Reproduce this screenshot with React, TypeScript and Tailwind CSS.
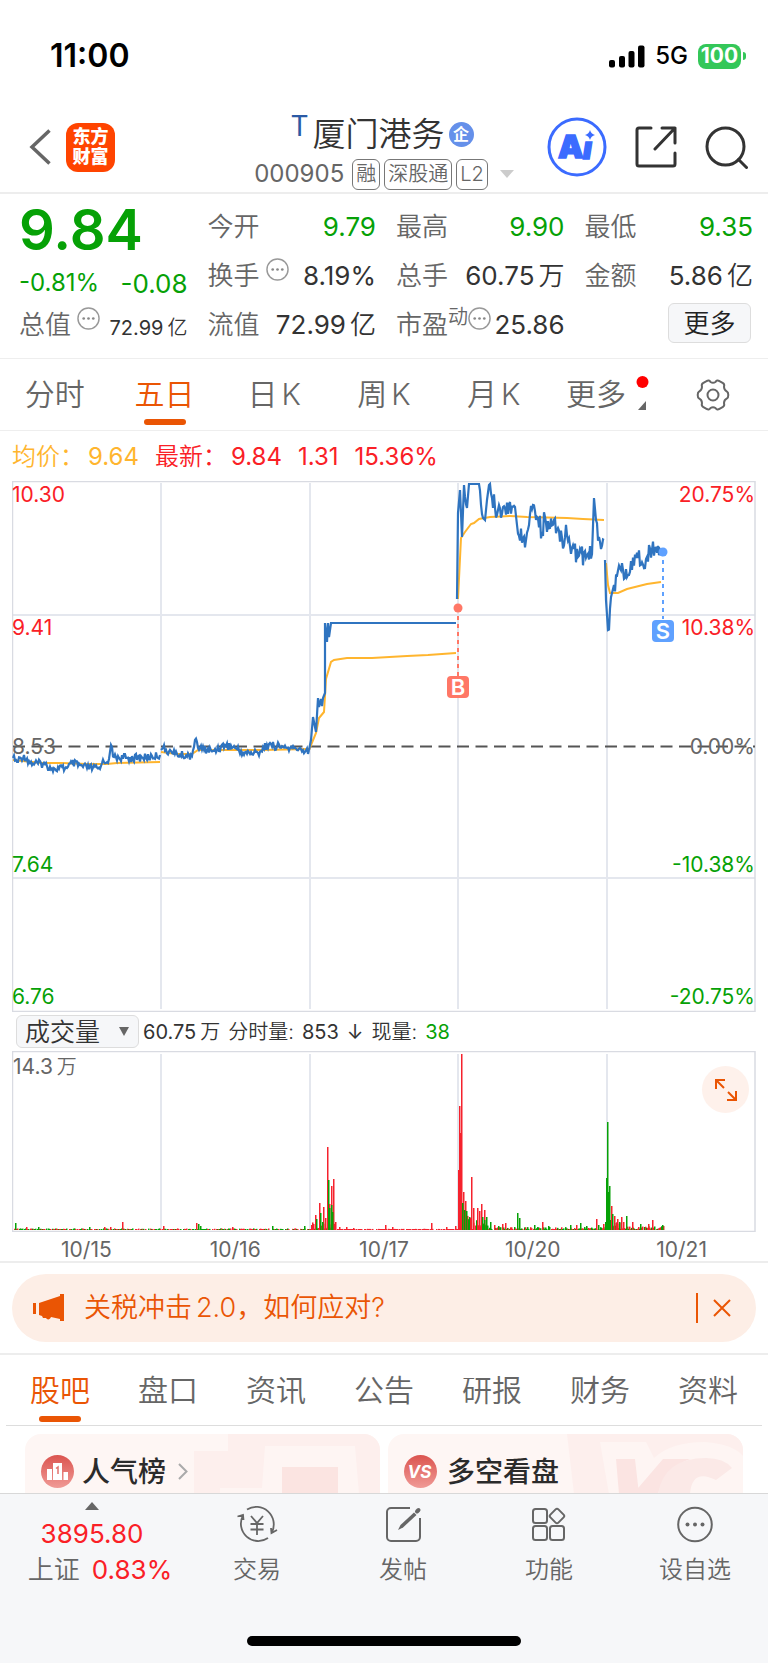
type Point = [number, number];

const avgLines = [
  "1,279 30,282 50,282 75,283 95,283 105,282 148,281",
  "149,271 165,273 180,273 186,269 210,269 250,269 297,268",
  "297,269 304,252 307,237 312,231 314,198 319,181 322,179 335,177 360,177 395,175 416,174 444,172",
  "446,118 449,57 453,51 459,43 462,42 467,38 478,36 498,35 515,36 555,37 571,38 592,39",
  "594,82 596,104 598,112 606,112 615,108 635,103 649,101",
];

const priceDays: { noise: number; points: Point[] }[] = [
  {
    noise: 4,
    points: [[1, 277], [5, 281], [12, 274], [18, 282], [31, 283], [43, 288], [55, 287], [60, 282], [71, 286], [88, 288], [90, 282], [97, 278], [99, 264], [102, 276], [115, 277], [131, 277], [148, 274]],
  },
  {
    noise: 4,
    points: [[149, 269], [151, 267], [160, 272], [168, 274], [180, 275], [183, 259], [186, 267], [201, 270], [213, 264], [223, 267], [231, 272], [246, 272], [255, 264], [271, 266], [285, 269], [297, 269]],
  },
  {
    noise: 0,
    points: [[297, 269], [299, 259], [301, 236], [304, 251], [306, 217], [307, 226], [309, 218], [310, 225], [311, 217], [313, 212], [313, 142], [315, 161], [316, 142], [317, 156], [319, 142], [444, 142]],
  },
  {
    noise: 11,
    points: [[445, 118], [446, 32], [448, 9], [450, 56], [452, 4], [455, 27], [457, 3], [467, 3], [471, 37], [473, 39], [475, 19], [477, 4], [480, 17], [483, 27], [486, 29], [491, 26], [498, 21], [503, 26], [505, 44], [514, 59], [517, 44], [521, 24], [525, 36], [530, 51], [533, 36], [538, 47], [545, 49], [550, 57], [555, 54], [560, 67], [566, 76], [580, 73], [582, 17], [584, 39], [587, 56], [592, 59]],
  },
  {
    noise: 11,
    points: [[593, 79], [594, 119], [596, 149], [600, 112], [602, 104], [608, 87], [611, 89], [615, 96], [620, 89], [626, 77], [635, 76], [640, 69], [651, 68]],
  },
];

const rand = (n: number) => {
  const s = Math.sin(n * 12.9898) * 43758.5453;
  return s - Math.floor(s);
};

// joins the points with a line that jitters a little on every step
function jitter(points: Point[], noise: number) {
  const out: string[] = [];
  points.forEach(([x, y], i) => {
    out.push(`${x},${y}`);
    const next = points[i + 1];
    // the top of the chart clips the price, so that stretch stays flat
    if (!next || noise === 0 || next[0] - x < 3 || (y === 3 && next[1] === 3)) return;
    for (let px = x + 1; px < next[0]; px += 1) {
      const base = y + ((next[1] - y) * (px - x)) / (next[0] - x);
      const py = base + (rand(px) - 0.5) * 2 * noise;
      out.push(`${px},${Math.max(3, py).toFixed(1)}`);
    }
  });
  return out.join(" ");
}

type Bar = { x: number; h: number; up: boolean };

const spikes: [number, number, 0 | 1][] = [
  [3, 7, 0], [14, 3, 1], [26, 3, 0], [77, 3, 0], [92, 3, 1], [98, 3, 1], [110, 8, 1], [151, 4, 1], [184, 7, 1], [186, 6, 0], [188, 4, 0], [220, 3, 1], [260, 4, 0], [292, 4, 0],
  [299, 5, 1], [301, 6, 1], [303, 15, 1], [304, 11, 0], [307, 27, 1], [308, 17, 0], [311, 23, 1], [313, 12, 1], [315, 83, 1], [316, 50, 0], [317, 26, 1], [319, 44, 1], [321, 51, 1], [319, 25, 0], [317, 22, 0], [320, 18, 0], [310, 8, 0], [323, 8, 1], [327, 3, 1], [334, 3, 1], [341, 2, 1],
  [373, 5, 1], [380, 3, 1], [419, 7, 1], [434, 3, 1], [443, 4, 1],
  [446, 60, 1], [447, 124, 1], [448, 97, 1], [449, 176, 1], [451, 38, 1], [450, 27, 0], [453, 29, 1], [452, 20, 0], [454, 19, 0], [457, 13, 0], [458, 12, 1], [459, 53, 1], [461, 22, 1], [465, 22, 1], [467, 19, 1], [469, 26, 1], [470, 13, 0], [472, 20, 1], [472, 10, 0], [474, 13, 0], [478, 8, 0], [482, 5, 1], [486, 4, 0], [490, 6, 1], [493, 7, 1], [505, 17, 0], [507, 12, 0], [522, 5, 0], [530, 8, 1], [536, 4, 0], [558, 5, 0], [564, 5, 1], [568, 7, 0], [574, 4, 0], [584, 11, 1], [586, 5, 0], [591, 6, 1], [593, 8, 0],
  [594, 52, 0], [595, 108, 0], [596, 38, 0], [597, 44, 0], [599, 24, 1], [600, 16, 0], [602, 14, 1], [605, 11, 1], [607, 8, 0], [609, 13, 1], [611, 8, 1], [614, 14, 0], [620, 8, 1], [628, 6, 0], [636, 6, 1], [640, 10, 1], [650, 5, 0],
];

const bars: Bar[] = [];
for (let x = 2; x < 652; x += 1) {
  let level = 1.6;
  if (x > 322 && x < 446) level = 1.2;
  if (x > 298 && x <= 322) level = 8;
  if (x >= 446 && x < 593) level = 3 + Math.max(0, 478 - x) / 2;
  if (x >= 593) level = 4 + Math.max(0, 615 - x) / 2;
  const h = level * rand(x + 700);
  if (h < 0.4) continue;
  bars.push({ x, h: Math.max(1, h), up: x > 322 && x < 446 ? true : rand(x + 90) > 0.5 });
}
spikes.forEach(([x, h, up]) => bars.push({ x, h, up: up === 1 }));

function Dots({ className = "" }: { className?: string }) {
  return (
    <svg width="23" height="23" viewBox="0 0 24 24" className={className} aria-hidden="true">
      <circle cx="12" cy="12" r="11" fill="none" stroke="#999" strokeWidth="1.500" />
      <circle cx="7" cy="12" r="1.400" fill="#888" />
      <circle cx="12" cy="12" r="1.400" fill="#888" />
      <circle cx="17" cy="12" r="1.400" fill="#888" />
    </svg>
  );
}

function StatusBar() {
  return (
    <div className="flex h-28 items-center justify-between pr-[22px] pl-[50px] text-black">
      <span className="text-[32px] font-semibold">11:00</span>
      <div className="flex items-center">
        <svg width="36" height="23" viewBox="0 0 36 23" aria-hidden="true">
          <rect x="0" y="15" width="6" height="7.500" rx="2" />
          <rect x="10" y="11" width="6" height="11.500" rx="2" />
          <rect x="19.500" y="6" width="6" height="16.500" rx="2" />
          <rect x="29" y="0.500" width="6.500" height="22" rx="2" />
        </svg>
        <span className="ml-2.5 text-2xl font-medium">5G</span>
        <span className="ml-2.5 flex h-[25px] w-[43px] items-center justify-center rounded-lg bg-[#34c759] text-[21px] font-bold text-white">
          100
        </span>
        <span className="ml-0.5 h-2 w-[3px] rounded-r-full bg-[#34c759]" />
      </div>
    </div>
  );
}

function Header() {
  return (
    <header className="grid h-[82px] grid-cols-[1fr_auto_1fr] items-center border-b-2 border-[#ededed]">
      <div className="flex items-center gap-[15px] pb-2.5 pl-[29px]">
        <button aria-label="返回">
          <svg width="22" height="36" viewBox="0 0 22 36" fill="none" stroke="#666" strokeWidth="3.500">
            <path d="M20.500 1.500 3 18l17.500 16.500" />
          </svg>
        </button>
        <a
          href="#"
          className="flex size-[49px] flex-col items-center justify-center rounded-xl bg-[#ff4400] text-lg leading-5 font-black text-white"
        >
          <span>东方</span>
          <span>财富</span>
        </a>
      </div>
      <div className="flex flex-col items-center gap-1">
        <h1 className="flex h-10 items-center pr-1 text-[33px] leading-10 font-[350] text-[#333]">
          <span className="mr-1 self-start text-[28px] leading-6 font-normal text-[#2b5aa5]">T</span>
          厦门港务
          <span className="ml-1 flex size-[25px] items-center justify-center rounded-full bg-[#6590ea] text-base leading-4 font-bold text-white">
            企
          </span>
        </h1>
        <div className="flex h-8 items-center gap-1 text-[#666]">
          <span className="mr-1 text-2xl">000905</span>
          <span className="flex h-[31px] items-center rounded-md border border-[#777] px-[3px] text-xl font-[350]">融</span>
          <span className="flex h-[31px] items-center rounded-md border border-[#777] px-[3px] text-xl font-[350]">深股通</span>
          <span className="flex h-[31px] items-center rounded-md border border-[#777] px-[3px] text-xl font-[350]">L2</span>
          <svg width="14" height="8" viewBox="0 0 14 8" className="ml-2" aria-hidden="true">
            <path d="M0 0h14L7 8z" fill="#ccc" />
          </svg>
        </div>
      </div>
      <div className="flex items-center justify-end gap-7 pr-5 pb-2.5">
        <button aria-label="Ai">
          <svg width="60" height="60" viewBox="0 0 60 60">
            <circle cx="30" cy="30" r="28" fill="none" stroke="#3b6bff" strokeWidth="3" />
            <text x="11" y="41" fill="#3b6bff" stroke="#3b6bff" strokeWidth="1.500" fontSize="32" className="font-black">
              A
            </text>
            <text x="36" y="42" fill="#3b6bff" stroke="#3b6bff" strokeWidth="1.500" fontSize="30" className="font-black italic">
              ı
            </text>
            <path d="M43 13q1 4 5 5-4 1-5 5-1-4-5-5 4-1 5-5z" fill="#3b6bff" />
          </svg>
        </button>
        <button aria-label="分享">
          <svg width="42" height="42" viewBox="0 0 42 42" fill="none" stroke="#333" strokeWidth="3" strokeLinecap="round" strokeLinejoin="round">
            <path d="M16 2H4a2 2 0 0 0-2 2v34a2 2 0 0 0 2 2h34a2 2 0 0 0 2-2V27M27 2h13v15M40 2 20 23" />
          </svg>
        </button>
        <button aria-label="搜索">
          <svg width="43" height="43" viewBox="0 0 43 43" fill="none" stroke="#333" strokeWidth="3" strokeLinecap="round">
            <circle cx="20.500" cy="20.500" r="18.500" />
            <path d="m33.500 33.500 8 8" />
          </svg>
        </button>
      </div>
    </header>
  );
}

function Stat({
  label,
  value,
  unit,
  green,
  info,
  sup,
}: {
  label: string;
  value: string;
  unit?: string;
  green?: boolean;
  info?: boolean;
  sup?: string;
}) {
  return (
    <div className="flex h-[49px] items-center justify-between text-[26px] whitespace-nowrap">
      <dt className="flex items-center font-[350] text-[#666]">
        {label}
        {sup && <span className="self-start text-xl leading-6">{sup}</span>}
        {info && <Dots className={sup ? "mb-3" : "mb-3 ml-1.5"} />}
      </dt>
      <dd className={green ? "text-[#06a106]" : "text-[#333]"}>
        {value}
        {unit && <span className="ml-1 font-[350]">{unit}</span>}
      </dd>
    </div>
  );
}

function Quote() {
  return (
    <section className="grid grid-cols-4 gap-5 border-b border-[#eee] pt-2 pr-[15px] pb-[9px] pl-[19px]">
      <div>
        <div className="flex h-14 items-center text-[56px] font-semibold text-[#06a106]">9.84</div>
        <div className="flex h-[42px] items-center justify-between pt-2 text-[#06a106]">
          <span className="text-2xl">-0.81%</span>
          <span className="text-[26px]">-0.08</span>
        </div>
        <div className="flex h-[49px] items-center justify-between whitespace-nowrap">
          <span className="flex items-center text-[26px] font-[350] text-[#666]">
            总值
            <Dots className="mb-3 ml-1.5" />
          </span>
          <span className="pt-1.5 text-xl text-[#333]">
            72.99<span className="ml-1 font-[350]">亿</span>
          </span>
        </div>
      </div>
      <dl>
        <Stat label="今开" value="9.79" green />
        <Stat label="换手" value="8.19%" info />
        <Stat label="流值" value="72.99" unit="亿" />
      </dl>
      <dl>
        <Stat label="最高" value="9.90" green />
        <Stat label="总手" value="60.75" unit="万" />
        <Stat label="市盈" value="25.86" sup="动" info />
      </dl>
      <div>
        <dl>
          <Stat label="最低" value="9.35" green />
          <Stat label="金额" value="5.86" unit="亿" />
        </dl>
        <div className="flex h-[49px] items-center justify-end">
          <button className="mr-0.5 mb-1 h-10 w-[83px] rounded-md border border-[#ddd] bg-[#f6f7f9] text-[26px] font-[350] text-[#222]">
            更多
          </button>
        </div>
      </div>
    </section>
  );
}

function PeriodTabs() {
  return (
    <nav className="grid h-[72px] grid-cols-7 border-b border-[#eee] text-[30px] font-[350] text-[#666]">
      <button>分时</button>
      <button className="relative text-[#ea5504]">
        五日
        <span className="absolute bottom-[5px] left-1/2 h-1.5 w-[42px] -translate-x-1/2 rounded-full bg-[#ea5504]" />
      </button>
      {["日", "周", "月"].map((unit) => (
        <button key={unit}>
          {unit}
          <span className="ml-1">K</span>
        </button>
      ))}
      <button className="flex items-center justify-center gap-2.5 pl-2">
        更多
        <svg width="13" height="54" viewBox="0 0 13 54" aria-hidden="true">
          <circle cx="6.500" cy="14" r="6" fill="#f00" />
          <path d="M10 33v9H2z" fill="#666" />
        </svg>
      </button>
      <button className="flex items-center justify-center" aria-label="设置">
        <svg width="34" height="34" viewBox="0 0 34 34" fill="none" stroke="#666" strokeWidth="2" strokeLinejoin="round">
          <path d="M10.500 3.200q2.500-1.600 4 .8 2.500 1.600 5 0 1.500-2.400 4-.8l3.500 2q1.800 1 1 3.800.2 3.400 3 4.600 1.300.8 1.300 3.400t-1.300 3.400q-2.800 1.200-3 4.600.8 2.800-1 3.800l-3.500 2q-2.500 1.600-4-.8-2.500-1.600-5 0-1.500 2.400-4 .8l-3.500-2q-1.800-1-1-3.800-.2-3.400-3-4.600-1.300-.8-1.300-3.400t1.300-3.400q2.800-1.200 3-4.600-.8-2.800 1-3.800z" />
          <circle cx="17" cy="17" r="5.500" />
        </svg>
      </button>
    </nav>
  );
}

const axisLabels = [
  { y: 21, left: "10.30", right: "20.75%", color: "#fa2026" },
  { y: 154, left: "9.41", right: "10.38%", color: "#fa2026" },
  { y: 273, left: "8.53", right: "0.00%", color: "#666" },
  { y: 391, left: "7.64", right: "-10.38%", color: "#06a106" },
  { y: 523, left: "6.76", right: "-20.75%", color: "#06a106" },
];

function PriceChart() {
  return (
    <div className="px-3">
      <div className="flex h-[50px] items-center pt-0.5 text-2xl whitespace-nowrap text-[#fa2026]">
        <span className="font-[350] text-[#ffb52e]">均价：</span>
        <span className="ml-1 text-[#ffb52e]">9.64</span>
        <span className="ml-4 font-[350]">最新：</span>
        <span className="ml-1">9.84</span>
        <span className="ml-4">1.31</span>
        <span className="ml-4">15.36%</span>
      </div>
      <svg viewBox="0 0 744 531" className="block w-full" role="img" aria-label="五日走势">
        <g fill="none" stroke="#e4e7ee" strokeWidth="2">
          <path d="M149 2V528M298 2V528M446 2V528M595 2V528M1 134H743M1 397H743" />
          <rect x="0.500" y="0.500" width="742.500" height="530" stroke="#d9dbe2" strokeWidth="1.500" />
        </g>
        <path d="M1 265.500H743" stroke="#555" strokeWidth="2" strokeDasharray="12 6.500" />
        {avgLines.map((line) => (
          <polyline key={line} points={line} fill="none" stroke="#ffb52e" strokeWidth="2" />
        ))}
        {priceDays.map((day, i) => (
          <polyline key={i} points={jitter(day.points, day.noise)} fill="none" stroke="#2f74c0" strokeWidth="2.200" />
        ))}
        <path d="M446 127V196" stroke="#ff7766" strokeWidth="2" strokeDasharray="4 4" />
        <circle cx="446" cy="127" r="4.500" fill="#ff7766" />
        <rect x="435" y="195" width="22" height="22" rx="4" fill="#ff7766" />
        <text x="446" y="214" textAnchor="middle" fontSize="22" fill="#fff" className="font-semibold">
          B
        </text>
        <path d="M651 71V138" stroke="#5fa1ff" strokeWidth="2" strokeDasharray="4 4" />
        <circle cx="651" cy="71" r="4.500" fill="#5fa1ff" />
        <rect x="640" y="139" width="22" height="22" rx="4" fill="#5fa1ff" />
        <text x="651" y="158" textAnchor="middle" fontSize="22" fill="#fff" className="font-semibold">
          S
        </text>
        {axisLabels.map((label) => (
          <g key={label.left} fontSize="21" fill={label.color}>
            <text x="0" y={label.y}>
              {label.left}
            </text>
            <text x="743" y={label.y} textAnchor="end">
              {label.right}
            </text>
          </g>
        ))}
      </svg>
    </div>
  );
}

function VolumeChart() {
  return (
    <div className="border-b-2 border-[#ededed] px-3">
      <div className="flex h-[39px] items-center text-xl whitespace-nowrap text-[#333]">
        <div className="relative ml-1">
          <select
            aria-label="指标"
            className="h-[33px] w-[123px] appearance-none rounded-md border border-[#ddd] bg-[#f6f7f9] pl-2 text-[25px] leading-7 font-[350]"
          >
            <option>成交量</option>
          </select>
          <svg width="10" height="9" viewBox="0 0 10 9" className="pointer-events-none absolute top-3 right-2.5">
            <path d="M0 0h10L5 9z" fill="#666" />
          </svg>
        </div>
        <span className="ml-1">60.75</span>
        <span className="ml-1 font-[350]">万</span>
        <span className="ml-2 font-[350]">分时量:</span>
        <span className="ml-2">853</span>
        <span className="ml-2">↓</span>
        <span className="ml-2 font-[350]">现量:</span>
        <span className="ml-2 text-[#06a106]">38</span>
      </div>
      <div className="relative">
        <svg viewBox="0 0 744 181" className="block w-full" role="img" aria-label="成交量">
          <g fill="none" stroke="#e4e7ee" strokeWidth="2">
            <path d="M149 3V178M298 3V178M446 3V178M595 3V178" />
            <rect x="0.500" y="0.500" width="742.500" height="180" stroke="#d9dbe2" strokeWidth="1.500" />
          </g>
          {bars.map((bar, i) => (
            <rect key={i} x={bar.x} y={179 - bar.h} width="1.500" height={bar.h} fill={bar.up ? "#f5222d" : "#06a106"} />
          ))}
          <text x="1" y="23" fontSize="21" fill="#666">
            14.3
            <tspan dx="4" fontSize="20" className="font-[350]">
              万
            </tspan>
          </text>
        </svg>
        <button
          aria-label="全屏"
          className="absolute top-[15px] right-[7px] flex size-[47px] items-center justify-center rounded-full bg-[#fef1eb]"
        >
          <svg width="24" height="24" viewBox="0 0 24 24" fill="none" stroke="#ea5504" strokeWidth="2">
            <path d="M2 11V2h9M2 2l8 8M22 13v9h-9M22 22l-8-8" />
          </svg>
        </button>
      </div>
      <div className="grid h-[29px] grid-cols-5 items-center pt-0.5 text-center text-[21px] text-[#666]">
        <span>10/15</span>
        <span>10/16</span>
        <span>10/17</span>
        <span>10/20</span>
        <span>10/21</span>
      </div>
    </div>
  );
}

function Notice() {
  return (
    <div className="border-b-2 border-[#ededed] px-3 py-[11px]">
      <div className="flex h-[68px] items-center rounded-full bg-[#fdeee6] pr-6 pl-5 text-[#ea5504]">
        <svg width="33" height="30" viewBox="0 0 33 30" fill="#ea5504" aria-hidden="true">
          <path d="M1 10h3v11H1zM7 10 28 3V1h4v27h-4v-2l-9-2c-1 3-4 3-5 1h-3l-1-2-3-1z" />
        </svg>
        <a href="#" className="ml-[19px] text-[27px] font-[350] whitespace-nowrap">
          关税冲击<span className="ml-1">2.0</span>，如何应对?
        </a>
        <span className="ml-auto h-[30px] w-0.5 bg-[#ea5504]" />
        <button aria-label="关闭" className="ml-3.5">
          <svg width="20" height="20" viewBox="0 0 20 20" fill="none" stroke="#ea5504" strokeWidth="2">
            <path d="m2 2 16 16M18 2 2 18" />
          </svg>
        </button>
      </div>
    </div>
  );
}

const sections = ["股吧", "盘口", "资讯", "公告", "研报", "财务", "资料"];

function SectionTabs() {
  return (
    <nav className="mx-1.5 grid h-[71px] grid-cols-7 border-b border-[#ddd] text-[30px] font-[350] text-[#666]">
      {sections.map((name, i) => (
        <button key={name} className={i === 0 ? "relative text-[#ea5504]" : ""}>
          {name}
          {i === 0 && (
            <span className="absolute bottom-[3px] left-1/2 h-1.5 w-[42px] -translate-x-1/2 rounded-full bg-[#ea5504]" />
          )}
        </button>
      ))}
    </nav>
  );
}

function Cards() {
  return (
    <div className="grid h-[67px] grid-cols-2 gap-2 overflow-hidden px-[25px] pt-2">
      <a href="#" className="relative flex h-32 items-start overflow-hidden rounded-2xl bg-[#fef6f4] pt-[17px] pl-4">
        <svg viewBox="0 0 186 60" className="absolute top-0 right-0 h-[60px] w-[186px]" aria-hidden="true">
          <path d="M34 0h152v60H0V17h34z" fill="#fdefed" />
          <path d="M71 12h90l4 48H26l0-6h42z" fill="#fef5f3" />
          <path d="M88 33h56v27H88z" fill="#fbe4e1" />
        </svg>
        <svg width="33" height="33" viewBox="0 0 33 33" className="mt-1" aria-hidden="true">
          <linearGradient id="rank" x2="0" y2="1">
            <stop stopColor="#db544f" />
            <stop offset="1" stopColor="#f09a96" />
          </linearGradient>
          <circle cx="16.500" cy="16.500" r="16.500" fill="url(#rank)" />
          <path d="M6 14h5v11H6zM12 8h9v17h-9zM22.500 17H27v8h-4.500z" fill="#fff" />
          <path d="M15 13.500 17 12v7" fill="none" stroke="#e2706b" strokeWidth="1.500" />
        </svg>
        <span className="relative ml-2 text-[28px] font-medium text-[#2b2b2b]">人气榜</span>
        <svg width="10" height="17" viewBox="0 0 10 17" className="relative mt-3 ml-3" fill="none" stroke="#aaa" strokeWidth="2">
          <path d="m1 1 7.500 7.500L1 16" />
        </svg>
      </a>
      <a href="#" className="relative flex h-32 items-start overflow-hidden rounded-2xl bg-[#fef6f4] pt-[17px] pl-4">
        <svg viewBox="0 0 176 60" className="absolute top-0 right-0 h-[60px] w-[176px]" aria-hidden="true">
          <path d="M0 0h176v60H7z" fill="#fdefed" />
          <path d="M33 8h46l8 16Q104 8 138 8q28 2 38 14v38H42z" fill="#fef5f3" />
          <path d="M49 25h19l4 35H52zM96 25h27q-26 10-32 35H66z" fill="#fbe4e2" />
          <path d="M91 60q6-36 48-36 18 0 26 10l-16 12q-24-12-26 14z" fill="#fbe9e7" />
        </svg>
        <svg width="33" height="33" viewBox="0 0 33 33" className="mt-1" aria-hidden="true">
          <circle cx="16.500" cy="16.500" r="16.500" fill="url(#rank)" />
          <text x="15.500" y="23" textAnchor="middle" fontSize="17" fill="#fff" className="font-bold italic">
            VS
          </text>
        </svg>
        <span className="relative ml-2.5 text-[28px] font-medium text-[#2b2b2b]">多空看盘</span>
      </a>
    </div>
  );
}

function BottomBar() {
  return (
    <footer className="h-[170px] border-t border-[#d8d8d8] bg-[#f6f7f9] text-2xl font-[350] text-[#666]">
      <div className="grid h-[142px] grid-cols-[184px_repeat(4,1fr)] items-start">
        <a href="#" className="flex flex-col items-center pt-2 text-[26px]">
          <svg width="14" height="8" viewBox="0 0 14 8" aria-hidden="true">
            <path d="M7 0 14 8H0z" fill="#666" />
          </svg>
          <span className="mt-1.5 leading-9 font-normal text-[#fa2026]">3895.80</span>
          <span className="flex gap-3 pl-4 leading-9 whitespace-nowrap">
            上证<span className="font-normal text-[#fa2026]">0.83%</span>
          </span>
        </a>
        <button className="flex flex-col items-center gap-2 pt-2.5 leading-9">
          <svg width="42" height="40" viewBox="0 0 42 40" fill="none" stroke="#666" strokeWidth="1.800">
            <path d="M1.500 12.500 7 11l.500 5M7 11.500A17.300 17.300 0 0 0 32 34M41 26l-5.500 3-.500-5M11 5.500A17.500 17.500 0 0 1 36 28" />
            <path d="m15 12 6 7 6-7M21 19v12M14.500 20h13M14.500 25.500h13" />
          </svg>
          交易
        </button>
        <button className="flex flex-col items-center gap-2 pt-2.5 leading-9">
          <svg width="40" height="40" viewBox="0 0 40 40" fill="none" stroke="#666" strokeWidth="2">
            <path d="M27 4H8a4 4 0 0 0-4 4v25a4 4 0 0 0 4 4h25a4 4 0 0 0 4-4V14" />
            <path d="m15 26 2.500-5L31 8.500 33.500 11 20 23.500z" fill="#666" stroke="none" />
            <path d="m34 7.500 1.500-1.500" strokeWidth="4" strokeLinecap="round" />
          </svg>
          发帖
        </button>
        <button className="flex flex-col items-center gap-2 pt-2.5 leading-9">
          <svg width="40" height="40" viewBox="0 0 40 40" fill="none" stroke="#666" strokeWidth="2" strokeLinejoin="round">
            <rect x="4" y="5" width="14" height="14" rx="2.500" />
            <rect x="4" y="22" width="14" height="14" rx="2.500" />
            <rect x="21" y="22" width="14" height="14" rx="2.500" />
            <path d="m26.600 5.400-5.200 5.200q-1.400 1.400 0 2.800l5.200 5.200q1.400 1.400 2.800 0l5.200-5.200q1.400-1.400 0-2.800l-5.200-5.200q-1.400-1.400-2.800 0z" />
          </svg>
          功能
        </button>
        <button className="flex flex-col items-center gap-2 pt-2.5 leading-9">
          <svg width="40" height="40" viewBox="0 0 40 40" aria-hidden="true">
            <circle cx="20" cy="20.500" r="16.800" fill="none" stroke="#666" strokeWidth="2" />
            <circle cx="12.500" cy="20.500" r="2" fill="#666" />
            <circle cx="20" cy="20.500" r="2" fill="#666" />
            <circle cx="27.500" cy="20.500" r="2" fill="#666" />
          </svg>
          设自选
        </button>
      </div>
      <div className="mx-auto h-2.5 w-[274px] rounded-full bg-black" />
    </footer>
  );
}

export default function App() {
  return (
    <div className="min-h-screen bg-white font-['Inter','Noto_Sans_CJK_SC',sans-serif]">
      <StatusBar />
      <Header />
      <main>
        <Quote />
        <PeriodTabs />
        <PriceChart />
        <VolumeChart />
        <Notice />
        <SectionTabs />
        <Cards />
      </main>
      <BottomBar />
    </div>
  );
}
